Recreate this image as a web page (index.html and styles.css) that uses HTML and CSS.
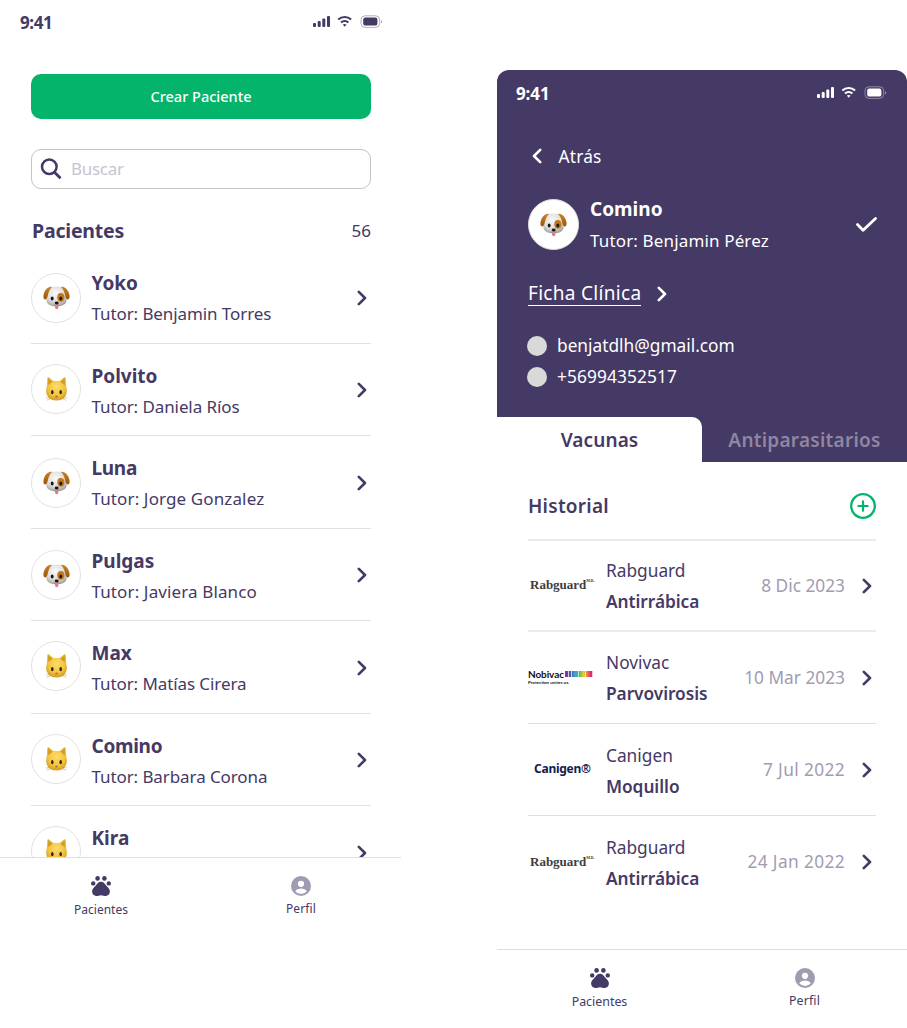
FILE: index.html
```html
<!DOCTYPE html>
<html lang="es">
<head>
<meta charset="utf-8">
<title>Pacientes</title>
<link rel="stylesheet" href="styles.css">
</head>
<body>
<svg class="defs" aria-hidden="true">
  <defs>
    <radialGradient id="fur" cx=".45" cy=".35" r=".7"><stop offset="0" stop-color="#fafafa"/><stop offset=".6" stop-color="#dfdedc"/><stop offset="1" stop-color="#a09c97"/></radialGradient>
    <linearGradient id="ear" x1="0" y1="0" x2="0" y2="1"><stop offset="0" stop-color="#c98526"/><stop offset="1" stop-color="#9c5508"/></linearGradient>
    <radialGradient id="gold" cx=".5" cy=".4" r=".65"><stop offset="0" stop-color="#fbdc6c"/><stop offset=".6" stop-color="#f3c43f"/><stop offset="1" stop-color="#cf961f"/></radialGradient>
    <symbol id="dog" viewBox="0 0 28 26">
      <path d="M5 7Q7 1.500 14 1.500T23 7q1.500 4 1.500 8.500c0 4.500-4.500 6.500-10.500 6.500s-10.500-2-10.500-6.500Q3.500 11 5 7z" fill="url(#fur)"/>
      <path d="M9.500 1.800C5 1 1.500 5 .5 10.500c-.5 3 .5 5 2 4.500C5 14 4.800 10 6.300 6.500 7.300 4 8.500 3.200 9.500 1.800zM18.500 1.800C23 1 26.500 5 27.500 10.500c.5 3-.5 5-2 4.500-2.500-1-2.300-5-3.800-8.500-1-2.500-2.200-3.300-3.200-4.700z" fill="url(#ear)"/>
      <ellipse cx="18.500" cy="12.800" rx="3.700" ry="4.600" fill="#bf7720"/>
      <ellipse cx="9.500" cy="14" rx="1.500" ry="2.100" fill="#1d1713"/>
      <ellipse cx="18.500" cy="14" rx="1.500" ry="2.100" fill="#1d1713"/>
      <path d="M12.500 21.500h3.400v2a1.700 1.700 0 0 1-3.400 0z" fill="#f2708a"/>
      <path d="M11 20.800q2 1 3.200-1 1 2 3.200 1" fill="none" stroke="#777" stroke-width=".7"/>
      <ellipse cx="14.200" cy="18.700" rx="2.100" ry="1.500" fill="#1b1717"/>
    </symbol>
    <symbol id="cat" viewBox="0 0 24 27">
      <path d="M2.600 2Q2.800.8 4 1.500L9 5.200h6L20 1.500q1.200-.7 1.400.5l.8 9.500c1 3.500.8 7-1 9.500Q18.500 25.500 12 25.500T2.800 21C1 18.500.8 15 1.800 11.500z" fill="url(#gold)"/>
      <path d="M3.400 2.500l4.500 3.500-4.600 3.600zM20.600 2.500L16.100 6l4.600 3.600z" fill="#d29a20"/>
      <ellipse cx="7.600" cy="16.800" rx="1.300" ry="2.200" fill="#302414"/>
      <ellipse cx="16.400" cy="16.800" rx="1.300" ry="2.200" fill="#302414"/>
      <ellipse cx="12" cy="21.300" rx="1.500" ry="1" fill="#b36f58"/>
      <path d="M9.800 23.200q1.500.5 2.200-.8.700 1.300 2.200.8M1 23l4-.8M1.800 25.300l3.600-1.500M23 23l-4-.8M22.200 25.300l-3.600-1.500" fill="none" stroke="#a8843f" stroke-width=".45"/>
    </symbol>
    <symbol id="chev" viewBox="0 0 10 16"><path d="M1.800 1.800L8 8l-6.200 6.200" fill="none" stroke="currentColor" stroke-width="2.600" stroke-linecap="round" stroke-linejoin="round"/></symbol>
    <symbol id="status" viewBox="0 0 70 14">
      <g fill="currentColor"><rect x="0" y="8" width="3" height="4" rx="1"/><rect x="4.700" y="6" width="3" height="6" rx="1"/><rect x="9.300" y="3.500" width="3" height="8.500" rx="1"/><rect x="14" y="1" width="3" height="11" rx="1"/>
      <rect x="50.200" y="2.600" width="14.200" height="8" rx="2.200"/><path d="M68 5v3.600q1.300-.5 1.300-1.800T68 5z" opacity=".4"/></g>
      <rect x="48" y=".8" width="18.700" height="11.600" rx="4" fill="none" stroke="currentColor" opacity=".4"/>
      <g fill="none" stroke="currentColor" stroke-width="2.100"><path d="M25.300 4.600a9.300 9.300 0 0 1 12.800 0M28 7.600a5.300 5.300 0 0 1 7.400 0"/></g>
      <path d="M29.800 9.600q1.900-1.400 3.800 0L31.700 11.700z" fill="currentColor"/>
    </symbol>
    <symbol id="paw" viewBox="0 0 20 20"><g fill="currentColor"><circle cx="2.200" cy="7.400" r="2.200"/><circle cx="6.600" cy="2.400" r="2.300"/><circle cx="13.400" cy="2.400" r="2.300"/><circle cx="17.800" cy="7.400" r="2.200"/><path d="M10 5.800c2.500 0 3.500 1.500 4.600 3 1.400 1.900 4.300 3.600 4.300 6.800 0 2.700-1.800 4.400-4.200 4.400-1.800 0-2.800-.8-4.700-.8s-2.900.8-4.700.8c-2.400 0-4.200-1.700-4.200-4.400 0-3.200 2.900-4.900 4.300-6.800 1.100-1.500 2.100-3 4.600-3z"/></g></symbol>
    <symbol id="user" viewBox="0 0 20 20"><circle cx="10" cy="10" r="10" fill="#a19bb2"/><circle cx="10" cy="7.800" r="3.100" fill="#fff"/><path d="M4.200 15.200c1.100-1.800 3.600-2.700 5.800-2.700s4.700.9 5.800 2.700Q13.500 17.900 10 17.900t-5.800-2.700z" fill="#fff"/></symbol>
  </defs>
</svg>

<main class="stage">
  <section class="phone list-phone">
    <header class="status"><span class="clock">9:41</span><svg class="status-icons"><use href="#status"/></svg></header>
    <button class="create">Crear Paciente</button>
    <label class="search">
      <svg class="lens" viewBox="0 0 22 22"><circle cx="9.300" cy="8.800" r="7.300" fill="none" stroke="currentColor" stroke-width="2.500"/><path d="M14.500 14.200l6 6" stroke="currentColor" stroke-width="2.800"/></svg>
      <span class="placeholder">Buscar</span>
    </label>
    <div class="list-head"><h1>Pacientes</h1><span class="count">56</span></div>
    <ul class="patients">
      <li class="patient"><span class="avatar"><svg class="dog"><use href="#dog"/></svg></span><div class="who"><b>Yoko</b><span>Tutor: Benjamin Torres</span></div><svg class="chev"><use href="#chev"/></svg></li>
      <li class="patient"><span class="avatar cat-avatar"><svg class="cat"><use href="#cat"/></svg></span><div class="who"><b>Polvito</b><span>Tutor: Daniela Ríos</span></div><svg class="chev"><use href="#chev"/></svg></li>
      <li class="patient"><span class="avatar"><svg class="dog"><use href="#dog"/></svg></span><div class="who"><b class="tight">Luna</b><span class="loose">Tutor: Jorge Gonzalez</span></div><svg class="chev"><use href="#chev"/></svg></li>
      <li class="patient"><span class="avatar"><svg class="dog"><use href="#dog"/></svg></span><div class="who"><b>Pulgas</b><span class="loose">Tutor: Javiera Blanco</span></div><svg class="chev"><use href="#chev"/></svg></li>
      <li class="patient"><span class="avatar cat-avatar"><svg class="cat"><use href="#cat"/></svg></span><div class="who"><b>Max</b><span>Tutor: Matías Cirera</span></div><svg class="chev"><use href="#chev"/></svg></li>
      <li class="patient"><span class="avatar cat-avatar"><svg class="cat"><use href="#cat"/></svg></span><div class="who"><b class="tight">Comino</b><span>Tutor: Barbara Corona</span></div><svg class="chev"><use href="#chev"/></svg></li>
      <li class="patient"><span class="avatar cat-avatar"><svg class="cat"><use href="#cat"/></svg></span><div class="who"><b>Kira</b></div><svg class="chev"><use href="#chev"/></svg></li>
    </ul>
    <nav class="nav">
      <a class="nav-item"><svg class="nav-icon"><use href="#paw"/></svg><span>Pacientes</span></a>
      <a class="nav-item profile"><svg class="nav-icon"><use href="#user"/></svg><span>Perfil</span></a>
    </nav>
  </section>

  <section class="phone detail-phone">
    <div class="hero">
      <header class="status"><span class="clock">9:41</span><svg class="status-icons"><use href="#status"/></svg></header>
      <a class="back"><svg class="chev flip"><use href="#chev"/></svg><span>Atrás</span></a>
      <div class="summary">
        <span class="avatar"><svg class="dog"><use href="#dog"/></svg></span>
        <div class="who"><b>Comino</b><span>Tutor: Benjamin Pérez</span></div>
        <svg class="check" viewBox="0 0 21 15"><path d="M1.500 7.600l5.600 5.700L19.500 1.500" fill="none" stroke="currentColor" stroke-width="2.800" stroke-linecap="round" stroke-linejoin="round"/></svg>
      </div>
      <a class="record"><span>Ficha Clínica</span><svg class="chev"><use href="#chev"/></svg></a>
      <div class="contact"><i class="dot"></i><span>benjatdlh@gmail.com</span></div>
      <div class="contact phone-number"><i class="dot"></i><span>+56994352517</span></div>
      <div class="tabs"><div class="tab active">Vacunas</div><div class="tab">Antiparasitarios</div></div>
    </div>
    <div class="history-head"><h2>Historial</h2><svg class="add" viewBox="0 0 26 26"><circle cx="13" cy="13" r="11.800" fill="none" stroke="currentColor" stroke-width="2.300"/><path d="M13 8.300v9.400M8.300 13h9.400" stroke="currentColor" stroke-width="2.200" stroke-linecap="round"/></svg></div>
    <ul class="vaccines">
      <li class="vaccine"><div class="brand rabguard"><span>Rabguard</span><sup>M.R.</sup></div><div class="dose"><span>Rabguard</span><b>Antirrábica</b></div><time>8 Dic 2023</time><svg class="chev"><use href="#chev"/></svg></li>
      <li class="vaccine"><div class="brand nobivac"><div class="nobi-name"><span>Nobivac</span><i class="grid"></i></div><small>Protection unites us.</small></div><div class="dose"><span>Novivac</span><b>Parvovirosis</b></div><time>10 Mar 2023</time><svg class="chev"><use href="#chev"/></svg></li>
      <li class="vaccine"><div class="brand canigen">Canigen®</div><div class="dose"><span>Canigen</span><b>Moquillo</b></div><time class="wide">7 Jul 2022</time><svg class="chev"><use href="#chev"/></svg></li>
      <li class="vaccine"><div class="brand rabguard"><span>Rabguard</span><sup>M.R.</sup></div><div class="dose"><span>Rabguard</span><b>Antirrábica</b></div><time class="wide">24 Jan 2022</time><svg class="chev"><use href="#chev"/></svg></li>
    </ul>
    <nav class="nav">
      <a class="nav-item"><svg class="nav-icon"><use href="#paw"/></svg><span>Pacientes</span></a>
      <a class="nav-item profile"><svg class="nav-icon"><use href="#user"/></svg><span>Perfil</span></a>
    </nav>
  </section>
</main>
</body>
</html>
```
FILE: styles.css
```css
* { box-sizing: border-box; margin: 0; padding: 0; }
body { width: 907px; height: 1028px; overflow: hidden; background: #fff; color: #453965; font-family: "Noto Sans", sans-serif; }
.defs { position: absolute; width: 0; height: 0; }
ul { list-style: none; }
svg { display: block; flex: none; }
.stage { display: flex; justify-content: space-between; height: 1028px; }
.phone { display: flex; flex-direction: column; white-space: nowrap; }
.list-phone { width: 401px; height: 930px; }
.detail-phone { width: 410px; height: 958px; margin-top: 70px; }

.status { display: flex; align-items: center; justify-content: space-between; height: 44px; padding: 0 18px 0 20px; flex: none; }
.clock { font-size: 17px; font-weight: 700; letter-spacing: -.4px; }
.status-icons { width: 70px; height: 14px; }
.create { display: flex; align-items: center; justify-content: center; flex: none; height: 45px; margin: 30px 30px 0 31px; padding-bottom: 2px; border: 0; border-radius: 10px; background: #03b46a; color: #fff; font: 500 14.500px "Noto Sans", sans-serif; }
.search { display: flex; align-items: center; flex: none; gap: 9px; height: 40px; margin: 30px 30px 0 31px; padding-left: 8px; border: 1px solid #c3c3c6; border-radius: 10px; }
.lens { width: 22px; height: 22px; }
.placeholder { padding-bottom: 2px; font-size: 17px; letter-spacing: -.3px; color: #c7c4d1; }
.list-head { display: flex; align-items: center; justify-content: space-between; flex: none; height: 62px; margin: 0 30px 0 32px; padding-top: 21px; }
h1 { font-size: 19.500px; line-height: 26px; font-weight: 700; letter-spacing: -.2px; }
.count { font-size: 17px; }
.patients { flex: none; height: 606px; padding: 0 30px 0 31px; overflow: hidden; }
.patient { display: flex; align-items: center; height: 92.500px; border-bottom: 1px solid #e2e2e4; }
.avatar { display: flex; align-items: center; justify-content: center; flex: none; width: 50px; height: 50px; border: 1px solid #e1e1e3; border-radius: 50%; background: #fff; }
.patient .avatar { margin-top: 2px; }
.patient .cat-avatar { margin-top: -1px; }
.dog { width: 27px; height: 25px; }
.cat { width: 23px; height: 26px; }
.who { display: flex; flex-direction: column; align-self: flex-start; flex: 1; padding: 17px 0 0 10.500px; }
.who b { font-size: 19px; line-height: 31px; font-weight: 700; }
.who b.tight { letter-spacing: -.3px; }
.who span { font-size: 17px; line-height: 29px; letter-spacing: -.09px; }
.who span.loose { letter-spacing: .12px; }
.chev { width: 10px; height: 16px; }
.patient .chev { margin: 2px 4px 0 0; }
.nav { display: flex; flex: none; height: 73px; padding: 18px 0 0 1px; border-top: 1px solid #dfdfe2; background: #fff; }
.nav-item { display: flex; flex: 1; flex-direction: column; align-items: center; gap: 5px; font-size: 12px; line-height: 18px; }
.nav-icon { width: 20px; height: 20px; }
.profile { gap: 4px; }
.profile span { letter-spacing: .15px; }

.hero { height: 392px; flex: none; display: flex; flex-direction: column; border-radius: 12px 12px 0 0; background: #453965; color: #fff; }
.hero .status { height: 46px; padding: 0 20px 0 19px; }
.hero .clock { letter-spacing: -.1px; }
.back { display: flex; align-items: center; gap: 16.500px; height: 30px; margin: 25px 0 0 35px; font-size: 17.300px; letter-spacing: .19px; }
.flip { transform: scaleX(-1); }
.summary { display: flex; align-items: center; height: 63px; margin: 22px 30px 0 31px; }
.summary .avatar { width: 51px; height: 51px; }
.summary .who { padding: 1px 0 0 11px; }
.summary .who span { line-height: 31px; letter-spacing: .15px; }
.check { width: 21px; height: 15px; }
.record { display: flex; align-items: center; gap: 16px; height: 32px; margin: 22px 0 0 31px; font-size: 19px; letter-spacing: .3px; }
.record span { border-bottom: 1px solid #fff; line-height: 23px; }
.contact { display: flex; align-items: center; gap: 10px; height: 31px; margin-left: 30px; font-size: 17.300px; }
.phone-number { letter-spacing: .11px; }
.record + .contact { margin-top: 20px; }
.dot { width: 20px; height: 20px; border-radius: 50%; background: #d9d9d9; }
.tabs { display: flex; height: 45px; margin-top: auto; font-size: 19px; font-weight: 600; }
.tab { display: flex; align-items: center; justify-content: center; width: 205px; color: #8f87a2; letter-spacing: .25px; }
.active { border-top-right-radius: 10px; background: #fff; color: #453965; letter-spacing: .1px; }
.history-head { display: flex; align-items: center; justify-content: space-between; flex: none; height: 79px; margin: 0 31px; padding-top: 11px; border-bottom: 2px solid #ebebed; }
h2 { font-size: 19px; font-weight: 600; letter-spacing: .26px; }
.add { width: 26px; height: 26px; color: #03b46a; }
.vaccines { flex: none; height: 407px; padding: 0 31px; }
.vaccine { display: flex; align-items: center; height: 92.400px; border-bottom: 1px solid #dfdfe1; font-size: 17.300px; }
.vaccine:last-child { border-bottom-color: transparent; }
.vaccine:first-child { height: 90.500px; border-bottom: 2px solid #ebebed; }
.brand { width: 78px; flex: none; }
.rabguard { display: flex; padding-left: 2px; font: bold 13px/16px "Liberation Serif", serif; letter-spacing: 0; color: #3e3e3e; }
.rabguard sup { font-size: 4px; line-height: 8px; letter-spacing: -.2px; }
.nobi-name { display: flex; align-items: center; gap: 1px; height: 11px; font: 700 10px/11px Lato, sans-serif; letter-spacing: -.1px; color: #111; }
.grid { width: 28px; height: 6px; background: repeating-linear-gradient(90deg, transparent 0 2.800px, rgba(255, 255, 255, .7) 2.800px 3.500px), repeating-linear-gradient(transparent 0 2.500px, rgba(255, 255, 255, .65) 2.500px 3px), linear-gradient(90deg, #8b2f96, #3f62b5 22%, #43a4d0 36%, #49b66c 50%, #e5d130 66%, #f08734 78%, #df2788 92%); }
.nobivac small { display: block; font: 700 4.500px/6px Lato, sans-serif; color: #111; }
.canigen { padding: 0 0 1px 6px; font: 700 12px/16px "Noto Sans", sans-serif; letter-spacing: -.25px; color: #0d2050; }
.dose { display: flex; flex: 1; flex-direction: column; padding-top: 2px; }
.dose span, .dose b { line-height: 31px; }
.dose b { font-weight: 600; letter-spacing: -.05px; }
time { color: #a29cb2; }
time.wide { letter-spacing: .38px; }
.vaccine .chev { margin: 1px 4px 0 17px; }
.detail-phone .nav { height: 79px; margin-top: auto; padding-left: 0; }
.detail-phone .nav-item { font-size: 12.400px; }
```
